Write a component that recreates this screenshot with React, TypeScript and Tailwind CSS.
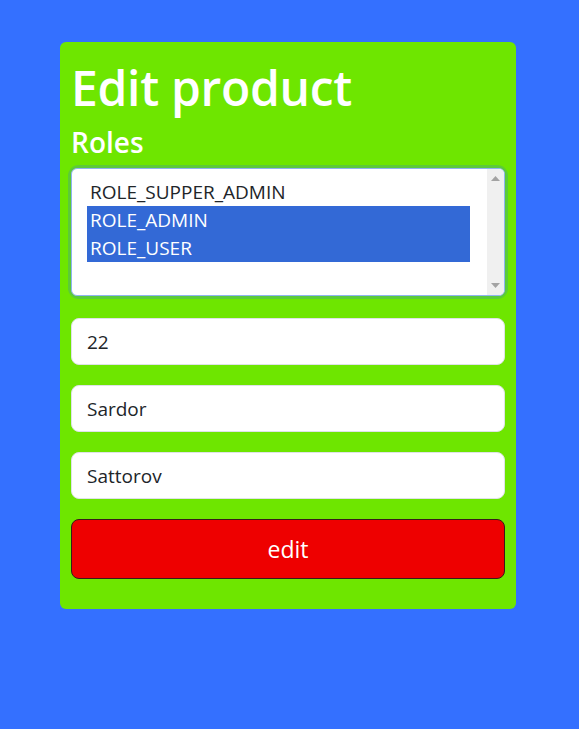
import React from "react";

const font = { fontFamily: '"Open Sans", "Noto Sans", sans-serif' };

export default function App() {
  return (
    <div className="min-h-[729px] w-full bg-[#3470ff] pt-[42px]" style={font}>
      <div className="ml-[60px] w-[456px] rounded-[6px] bg-[#6ee600] px-[11px] pb-[30px] pt-[11px]">
        <h1 className="text-[48px] font-semibold leading-[70px] tracking-[-0.3px] text-white">Edit product</h1>
        <h2 className="mt-[2px] text-[28px] font-semibold leading-[34px] text-white">Roles</h2>
        <div className="mt-[9px] rounded-[8px] shadow-[0_0_0_3px_#5cca3a]">
          <div className="flex h-[128px] overflow-hidden rounded-[6px] border border-[#8fb4f0] bg-white">
            <div className="flex-1 pl-[15px] pt-[9px] text-[19px] leading-[28px] text-[#212529]">
              <div className="px-[3px]">ROLE_SUPPER_ADMIN</div>
              <div className="mr-[17px] bg-[#3369d6] px-[3px] text-white">ROLE_ADMIN</div>
              <div className="mr-[17px] bg-[#3369d6] px-[3px] text-white">ROLE_USER</div>
            </div>
            <div className="flex w-[17px] flex-col items-center justify-between bg-[#f0f0f0] py-[7px]">
              <svg width="9" height="5" viewBox="0 0 9 5"><path d="M4.5 0 L9 5 L0 5 Z" fill="#a3a3a3" /></svg>
              <svg width="9" height="5" viewBox="0 0 9 5"><path d="M0 0 L9 0 L4.5 5 Z" fill="#a3a3a3" /></svg>
            </div>
          </div>
        </div>
        <div className="mt-[22px] flex flex-col gap-[20px]">
          {["22", "Sardor", "Sattorov"].map((v) => (
            <input
              key={v}
              defaultValue={v}
              className="h-[47px] w-full rounded-[8px] border border-[#dee2e6] bg-white px-[15px] text-[19px] text-[#212529] outline-none"
              style={font}
            />
          ))}
        </div>
        <button
          className="mt-[20px] h-[60px] w-full rounded-[8px] border border-[#3a1a1a] bg-[#ee0000] text-[23px] text-white"
          style={font}
        >
          edit
        </button>
      </div>
    </div>
  );
}
